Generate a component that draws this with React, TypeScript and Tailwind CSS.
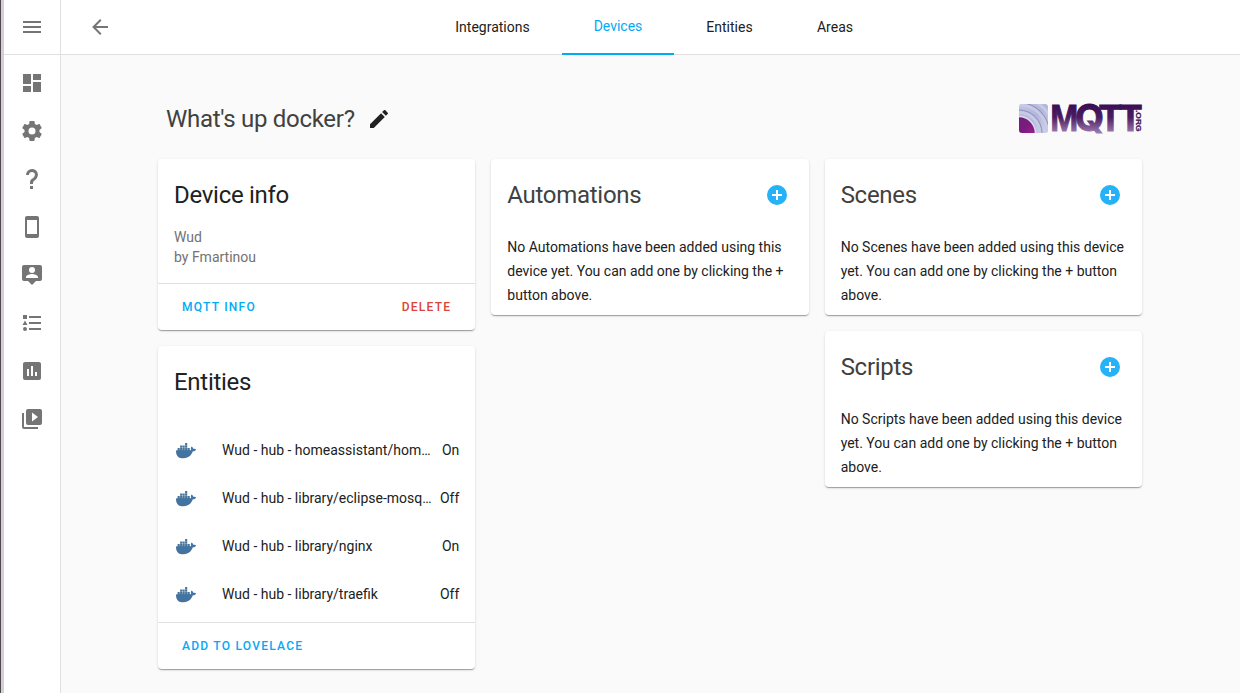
import React from "react";

const icons = {
  menu: "M3,6H21V8H3V6M3,11H21V13H3V11M3,16H21V18H3V16Z",
  back: "M20,11V13H8L13.5,18.5L12.08,19.92L4.16,12L12.08,4.08L13.5,5.5L8,11H20Z",
  dashboard: "M13,3V9H21V3M13,21H21V11H13M3,21H11V15H3M3,13H11V3H3V13Z",
  cog: "M12,15.5A3.5,3.5 0 0,1 8.5,12A3.5,3.5 0 0,1 12,8.5A3.5,3.5 0 0,1 15.5,12A3.5,3.5 0 0,1 12,15.5M19.43,12.97C19.47,12.65 19.5,12.33 19.5,12C19.5,11.67 19.47,11.34 19.43,11L21.54,9.37C21.73,9.22 21.78,8.95 21.66,8.73L19.66,5.27C19.54,5.05 19.27,4.96 19.05,5.05L16.56,6.05C16.04,5.66 15.5,5.32 14.87,5.07L14.5,2.42C14.46,2.18 14.25,2 14,2H10C9.75,2 9.54,2.18 9.5,2.42L9.13,5.07C8.5,5.32 7.96,5.66 7.44,6.05L4.95,5.05C4.73,4.96 4.46,5.05 4.34,5.27L2.34,8.73C2.21,8.95 2.27,9.22 2.46,9.37L4.57,11C4.53,11.34 4.5,11.67 4.5,12C4.5,12.33 4.53,12.65 4.57,12.97L2.46,14.63C2.27,14.78 2.21,15.05 2.34,15.27L4.34,18.73C4.46,18.95 4.73,19.03 4.95,18.95L7.44,17.94C7.96,18.34 8.5,18.68 9.13,18.93L9.5,21.58C9.54,21.82 9.75,22 10,22H14C14.25,22 14.46,21.82 14.5,21.58L14.87,18.93C15.5,18.67 16.04,18.34 16.56,17.94L19.05,18.95C19.27,19.03 19.54,18.95 19.66,18.73L21.66,15.27C21.78,15.05 21.73,14.78 21.54,14.63L19.43,12.97Z",
  help: "M10,19H13V22H10V19M12,2C17.35,2.22 19.68,7.62 16.5,11.67C15.67,12.67 14.33,13.33 13.67,14.17C13,15 13,16 13,17H10C10,15.33 10,13.92 10.67,12.92C11.33,11.92 12.67,11.33 13.5,10.67C15.92,8.43 15.32,5.26 12,5A3,3 0 0,0 9,8H6A6,6 0 0,1 12,2Z",
  phone: "M17,19H7V5H17M17,1H7C5.89,1 5,1.89 5,3V21A2,2 0 0,0 7,23H17A2,2 0 0,0 19,21V3C19,1.89 18.1,1 17,1Z",
  account: "M20,2H4A2,2 0 0,0 2,4V16A2,2 0 0,0 4,18H8L12,22L16,18H20A2,2 0 0,0 22,16V4A2,2 0 0,0 20,2M12,4A3,3 0 0,1 15,7A3,3 0 0,1 12,10A3,3 0 0,1 9,7A3,3 0 0,1 12,4M18,15H6V14C6,12 10,10.9 12,10.9C14,10.9 18,12 18,14V15Z",
  list: "M5,9.5L7.5,14H2.5L5,9.5M3,4H7V8H3V4M5,20A2,2 0 0,0 7,18A2,2 0 0,0 5,16A2,2 0 0,0 3,18A2,2 0 0,0 5,20M9,5V7H21V5H9M9,19H21V17H9V19M9,13H21V11H9V13Z",
  chart: "M17,17H15V13H17M13,17H11V7H13M9,17H7V10H9M19,3H5C3.89,3 3,3.89 3,5V19A2,2 0 0,0 5,21H19A2,2 0 0,0 21,19V5C21,3.89 20.1,3 19,3Z",
  media: "M4,6H2V20A2,2 0 0,0 4,22H18V20H4V6M20,2H8A2,2 0 0,0 6,4V16A2,2 0 0,0 8,18H20A2,2 0 0,0 22,16V4A2,2 0 0,0 20,2M12,14.5V5.5L18,10L12,14.5Z",
  pencil: "M20.71,7.04C21.1,6.65 21.1,6 20.71,5.63L18.37,3.29C18,2.9 17.35,2.9 16.96,3.29L15.12,5.12L18.87,8.87M3,17.25V21H6.75L17.81,9.93L14.06,6.18L3,17.25Z",
  plus: "M17,13H13V17H11V13H7V11H11V7H13V11H17M12,2A10,10 0 0,0 2,12A10,10 0 0,0 12,22A10,10 0 0,0 22,12A10,10 0 0,0 12,2Z",
  docker:
    "M21.81,11.25C21.75,11.21 21.25,10.82 20.17,10.82C19.89,10.82 19.61,10.85 19.33,10.9C19.12,9.5 17.95,8.79 17.9,8.76L17.61,8.59L17.43,8.86C17.19,9.22 17,9.63 16.92,10.05C16.72,10.85 16.84,11.4 17.25,12C16.76,12.2 15.96,12.25 15.79,12.25H2.62C2.28,12.25 2,12.5 2,12.9C2,14.3 2.18,15.54 2.58,16.62C3.03,17.81 3.71,18.69 4.58,19.23C5.56,19.83 7.17,20.17 9,20.17C9.79,20.17 10.61,20.1 11.42,19.95C12.54,19.75 13.62,19.36 14.61,18.79C15.43,18.32 16.16,17.72 16.78,17C17.82,15.83 18.43,14.5 18.88,13.35H19.07C20.23,13.35 20.95,12.89 21.35,12.5C21.61,12.25 21.81,11.95 21.95,11.61L22,11.37L21.81,11.25M3.6,10.1H5.75V12.3H3.6ZM6.1,10.1H8.25V12.3H6.1ZM8.6,10.1H10.75V12.3H8.6ZM11.1,10.1H13.25V12.3H11.1ZM13.6,10.1H15.75V12.3H13.6ZM6.1,7.6H8.25V9.75H6.1ZM8.6,7.6H10.75V9.75H8.6ZM11.1,7.6H13.25V9.75H11.1ZM11.1,5.1H13.25V7.25H11.1Z",
};

type IconName = keyof typeof icons;

function Icon({ name, className = "" }: { name: IconName; className?: string }) {
  return (
    <svg viewBox="0 0 24 24" className={`block size-6 shrink-0 fill-current ${className}`}>
      <path d={icons[name]} />
    </svg>
  );
}

const nav: IconName[] = ["dashboard", "cog", "help", "phone", "account", "list", "chart", "media"];

const entities = [
  ["Wud - hub - homeassistant/homeassistant", "On"],
  ["Wud - hub - library/eclipse-mosquitto", "Off"],
  ["Wud - hub - library/nginx", "On"],
  ["Wud - hub - library/traefik", "Off"],
];

const letters: [string, number, number, string][] = [
  ["M", 32.2, 28, "Liberation Sans, Arial, sans-serif"],
  ["Q", 57, 29, "Inter, sans-serif"],
  ["T", 81.3, 22.5, "Liberation Sans, Arial, sans-serif"],
  ["T", 101.2, 22.5, "Liberation Sans, Arial, sans-serif"],
];

function MqttLogo() {
  return (
    <svg viewBox="0 0 124 30" className="block h-[30px] w-[124px] overflow-visible" aria-label="MQTT.org">
      <defs>
        <linearGradient id="wave" x1="0" y1="0" x2="1" y2="1">
          <stop offset="0" stopColor="#c3c5e2" />
          <stop offset=".5" stopColor="#b3b6da" />
          <stop offset="1" stopColor="#d2d3ea" />
        </linearGradient>
        <linearGradient id="core" x1="0" y1="0" x2="1" y2="1">
          <stop offset="0" stopColor="#67227a" />
          <stop offset=".5" stopColor="#7a1c7c" />
          <stop offset=".75" stopColor="#9c1f8c" />
          <stop offset="1" stopColor="#b04fa8" />
        </linearGradient>
        <linearGradient id="letters" gradientUnits="userSpaceOnUse" x1="0" y1="0" x2="0" y2="30">
          <stop offset="0" stopColor="#3a0d52" />
          <stop offset=".45" stopColor="#4b1c63" />
          <stop offset="1" stopColor="#a581b5" />
        </linearGradient>
        <clipPath id="badge">
          <rect x="1" y="0" width="29" height="29" rx="3" />
        </clipPath>
      </defs>
      <g clipPath="url(#badge)">
        <rect width="30" height="30" fill="url(#wave)" />
        <g fill="none" strokeWidth="2.5" stroke="#c9cbe5">
          <circle cx="1" cy="29" r="20.5" />
          <circle cx="1" cy="29" r="28" />
          <circle cx="1" cy="29" r="35" />
        </g>
        <g fill="none" stroke="#8a8fc2" strokeWidth="1">
          <circle cx="1" cy="29" r="23" />
          <circle cx="1" cy="29" r="30.5" />
        </g>
        <circle cx="1" cy="29" r="17.2" fill="#dcdcee" />
        <circle cx="1" cy="29" r="15.7" fill="url(#core)" />
      </g>
      <g fill="url(#letters)" stroke="url(#letters)" strokeWidth="1" fontWeight="700" fontSize="37.5">
        {letters.map(([letter, x, width, family]) => (
          <text key={x} x={x} y="27.3" textLength={width} lengthAdjust="spacingAndGlyphs" fontFamily={family}>
            {letter}
          </text>
        ))}
      </g>
      <text
        transform="translate(117.9 6) rotate(90)"
        fontFamily="Liberation Sans, Arial, sans-serif"
        fontWeight="700"
        fontSize="7.8"
        fill="#42165b"
        stroke="#42165b"
        strokeWidth=".25"
        textLength="21.5"
        lengthAdjust="spacingAndGlyphs"
      >
        .ORG
      </text>
    </svg>
  );
}

function Card({ children }: { children: React.ReactNode }) {
  return (
    <section className="overflow-hidden rounded bg-white shadow-[0_2px_1px_-1px_rgba(0,0,0,0.2),0_1px_1px_0_rgba(0,0,0,0.14),0_1px_3px_0_rgba(0,0,0,0.12)]">
      {children}
    </section>
  );
}

function AddCard({ title }: { title: string }) {
  return (
    <Card>
      <div className="flex h-[72px] items-center justify-between pl-4 pr-5 text-[#414141]">
        <h2 className="text-2xl tracking-[-0.012em]">{title}</h2>
        <Icon name="plus" className="text-[#25b2f7]" />
      </div>
      <p className="h-[84px] px-4 pt-1 text-sm leading-6 text-[#212121]">
        {`No ${title} have been added using this device yet. You can add one by clicking the + button above.`}
      </p>
    </Card>
  );
}

export default function App() {
  return (
    <div className="flex h-[693px] w-[1240px] overflow-hidden border-l border-[#504a4f] bg-[#fafafa] font-['Roboto',sans-serif] text-[#212121]">
      <aside className="flex w-[60px] shrink-0 flex-col border-l-[3px] border-r border-l-[#d2d0d4] border-r-[#e0e0e0] bg-white text-[#757575]">
        <div className="flex h-[55px] items-center border-b border-[#e0e0e0] pl-4">
          <Icon name="menu" />
        </div>
        <nav className="flex flex-col gap-6 pl-4 pt-4">
          {nav.map((name) => (
            <Icon key={name} name={name} />
          ))}
        </nav>
      </aside>
      <div className="flex flex-1 flex-col">
        <header className="flex h-[55px] border-b border-[#e0e0e0] bg-white text-sm">
          <div className="flex w-[362px] items-center pl-[27px] text-[#757575]">
            <Icon name="back" />
          </div>
          <div className="flex w-[139px] items-center justify-center">Integrations</div>
          <div className="-mb-px flex w-28 items-center justify-center border-b-2 border-[#03a9f4] pb-0.5 text-[#03a9f4]">Devices</div>
          <div className="flex w-[111px] items-center justify-center">Entities</div>
          <div className="flex w-[100px] items-center justify-center">Areas</div>
        </header>
        <main className="ml-[97px] mt-12 w-[984px]">
          <div className="flex h-8 items-center justify-between">
            <div className="flex items-center gap-3 pl-2">
              <h1 className="text-2xl tracking-[-0.012em] text-[#414141]">What's up docker?</h1>
              <Icon name="pencil" />
            </div>
            <MqttLogo />
          </div>
          <div className="mt-6 grid grid-cols-3 items-start gap-4">
            <div className="flex flex-col gap-4">
              <Card>
                <h2 className="flex h-[68px] items-center px-4 pt-1 text-2xl tracking-[-0.012em]">Device info</h2>
                <div className="h-14 px-4 text-sm text-[#727272]">
                  <div>Wud</div>
                  <div>by Fmartinou</div>
                </div>
                <div className="flex h-[47px] items-center justify-between border-t border-[#e0e0e0] px-6 text-xs font-medium tracking-[1.25px]">
                  <span className="text-[#03a9f4]">MQTT INFO</span>
                  <span className="text-[#db4437]">DELETE</span>
                </div>
              </Card>
              <Card>
                <h2 className="flex h-20 items-center px-4 pb-2 text-2xl tracking-[-0.012em]">Entities</h2>
                <div className="flex h-[196px] flex-col">
                  {entities.map(([name, state]) => (
                    <div key={name} className="flex h-12 items-center px-4 text-sm">
                      <Icon name="docker" className="text-[#44739e]" />
                      <div className="ml-6 min-w-0 flex-1 truncate">{name}</div>
                      <div className="ml-2">{state}</div>
                    </div>
                  ))}
                </div>
                <div className="flex h-[47px] items-center border-t border-[#e0e0e0] px-6 text-xs font-medium tracking-[1.25px] text-[#03a9f4]">
                  ADD TO LOVELACE
                </div>
              </Card>
            </div>
            <AddCard title="Automations" />
            <div className="flex flex-col gap-4">
              <AddCard title="Scenes" />
              <AddCard title="Scripts" />
            </div>
          </div>
        </main>
      </div>
    </div>
  );
}
